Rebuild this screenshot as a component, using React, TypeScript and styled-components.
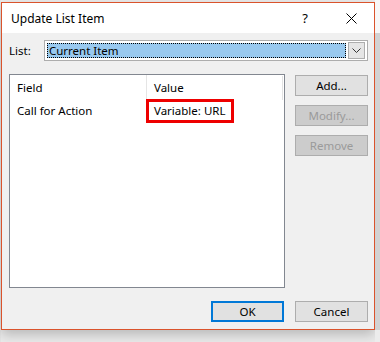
import React from "react";
import styled, { createGlobalStyle } from "styled-components";

const GlobalStyle = createGlobalStyle`
  html, body {
    margin: 0;
    padding: 0;
    width: 380px;
    height: 342px;
    overflow: hidden;
    background: #ececec;
    font-family: "Noto Sans", "Open Sans", sans-serif;
  }
`;

const Page = styled.div`
  display: flex;
  width: 380px;
  height: 342px;
  padding-top: 2px;
  box-sizing: border-box;
  background: linear-gradient(to right, #e6e6e6 0 1px, transparent 1px);
`;

const LeftStrip = styled.div`
  width: 1px;
  flex: none;
`;

const RightStrip = styled.div`
  flex: 1;
  margin-top: -2px;
  background: linear-gradient(#f7f7f7 0 33px, #d2d2d2 33px 330px, #ececec 330px);
`;

const Window = styled.div`
  width: 374px;
  height: 328px;
  box-sizing: border-box;
  border: 1px solid #da532c;
  background: #f0f0f0;
  display: flex;
  flex-direction: column;
  box-shadow: 0 5px 12px rgba(0, 0, 0, 0.22);
  flex: none;
`;

const TitleBar = styled.div`
  height: 30px;
  background: #ffffff;
  display: flex;
  align-items: center;
  padding-left: 9px;
  flex: none;
`;

const Title = styled.div`
  flex: 1;
  font-size: 12px;
  color: #000;
`;

const TitleButton = styled.div<{ $w: number }>`
  width: ${(p) => p.$w}px;
  height: 30px;
  display: flex;
  align-items: center;
  justify-content: center;
  font-size: 13px;
  color: #000;
`;

const Body = styled.div`
  flex: 1;
  display: flex;
  flex-direction: column;
  padding: 7px 6px 0 7px;
`;

const ListRow = styled.div`
  display: flex;
  align-items: center;
  height: 21px;
`;

const Label = styled.div`
  width: 35px;
  font-size: 11.5px;
  color: #000;
`;

const Combo = styled.div`
  width: 325px;
  height: 21px;
  box-sizing: border-box;
  border: 1px solid #adadad;
  background: #ffffff;
  display: flex;
  align-items: center;
  padding: 2px;
  gap: 2px;
`;

const ComboValue = styled.div`
  flex: 1;
  height: 15px;
  box-sizing: border-box;
  background: #99c9ef;
  border: 1px dotted #000;
  font-size: 11.5px;
  line-height: 13px;
  padding-left: 1px;
  color: #000;
`;

const ComboButton = styled.div`
  width: 17px;
  height: 17px;
  box-sizing: border-box;
  border: 1px solid #adadad;
  background: #e5e5e5;
  display: flex;
  align-items: center;
  justify-content: center;
`;

const Main = styled.div`
  display: flex;
  margin-top: 13px;
  gap: 10px;
`;

const ListBox = styled.div`
  width: 276px;
  height: 214px;
  box-sizing: border-box;
  border: 1px solid #828790;
  background: #ffffff;
  position: relative;
`;

const HeaderRow = styled.div`
  display: flex;
  height: 24px;
  align-items: center;
`;

const HeaderCell = styled.div<{ $w?: number; $sep?: boolean }>`
  width: ${(p) => (p.$w ? `${p.$w}px` : "auto")};
  flex: ${(p) => (p.$w ? "none" : "1")};
  height: 100%;
  box-sizing: border-box;
  display: flex;
  align-items: center;
  padding-left: 7px;
  font-size: 11.5px;
  color: #000;
  border-right: ${(p) => (p.$sep ? "1px solid #e5e5e5" : "none")};
`;

const DataRow = styled.div`
  display: flex;
  height: 22px;
  align-items: center;
`;

const Cell = styled.div<{ $w?: number }>`
  width: ${(p) => (p.$w ? `${p.$w}px` : "auto")};
  flex: ${(p) => (p.$w ? "none" : "1")};
  padding-left: 7px;
  font-size: 11.5px;
  color: #000;
  box-sizing: border-box;
`;

const Highlight = styled.div`
  position: absolute;
  left: 136px;
  top: 24px;
  width: 88px;
  height: 24px;
  box-sizing: border-box;
  border: 3px solid #ee0000;
  pointer-events: none;
`;

const ScrollHint = styled.div`
  position: absolute;
  right: 1px;
  top: 1px;
  width: 1px;
  height: 24px;
  background: #e3e3e3;
`;

const SideButtons = styled.div`
  display: flex;
  flex-direction: column;
  gap: 9px;
  padding-top: 1px;
`;

const Button = styled.div<{ $disabled?: boolean; $default?: boolean }>`
  width: 73px;
  height: 21px;
  box-sizing: border-box;
  border: ${(p) => (p.$default ? "2px solid #0078d7" : "1px solid #adadad")};
  background: ${(p) => (p.$disabled ? "#cccccc" : "#e1e1e1")};
  color: ${(p) => (p.$disabled ? "#9a9a9a" : "#000")};
  display: flex;
  align-items: center;
  justify-content: center;
  font-size: 11.5px;
`;

const Footer = styled.div`
  display: flex;
  justify-content: flex-end;
  gap: 11px;
  margin-top: 13px;
`;

export default function App() {
  return (
    <>
      <GlobalStyle />
      <Page>
        <LeftStrip />
        <Window>
          <TitleBar>
            <Title>Update List Item</Title>
            <TitleButton $w={46}>?</TitleButton>
            <TitleButton $w={46}>
              <svg width="11" height="11" viewBox="0 0 11 11">
                <path d="M0.5 0.5 L10.5 10.5 M10.5 0.5 L0.5 10.5" stroke="#000" strokeWidth="1" />
              </svg>
            </TitleButton>
          </TitleBar>
          <Body>
            <ListRow>
              <Label>List:</Label>
              <Combo>
                <ComboValue>Current Item</ComboValue>
                <ComboButton>
                  <svg width="9" height="5" viewBox="0 0 9 5">
                    <path d="M0.5 0.5 L4.5 4.5 L8.5 0.5" stroke="#333" strokeWidth="1" fill="none" />
                  </svg>
                </ComboButton>
              </Combo>
            </ListRow>
            <Main>
              <ListBox>
                <HeaderRow>
                  <HeaderCell $w={137} $sep>Field</HeaderCell>
                  <HeaderCell>Value</HeaderCell>
                </HeaderRow>
                <DataRow>
                  <Cell $w={137}>Call for Action</Cell>
                  <Cell>Variable: URL</Cell>
                </DataRow>
                <Highlight />
                <ScrollHint />
              </ListBox>
              <SideButtons>
                <Button>Add...</Button>
                <Button $disabled>Modify...</Button>
                <Button $disabled>Remove</Button>
              </SideButtons>
            </Main>
            <Footer>
              <Button $default>OK</Button>
              <Button>Cancel</Button>
            </Footer>
          </Body>
        </Window>
        <RightStrip />
      </Page>
    </>
  );
}
